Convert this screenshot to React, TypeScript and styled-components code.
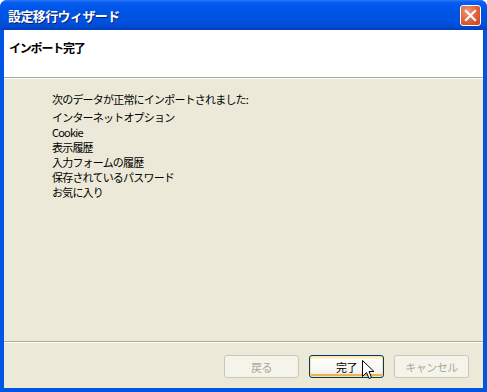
import React from "react";
import styled, { createGlobalStyle } from "styled-components";

const Global = createGlobalStyle`
  html, body { margin: 0; padding: 0; background: #ffffff; }
  * { box-sizing: border-box; }
`;

const FONT = `"MS UI Gothic", "Noto Sans CJK JP", "Liberation Sans", sans-serif`;

const Window = styled.div`
  position: relative;
  width: 487px;
  height: 392px;
  display: flex;
  flex-direction: column;
  background: #0055e5;
  border-radius: 7px 7px 0 0;
  overflow: hidden;
  font-family: ${FONT};
`;

const TitleBar = styled.div`
  height: 30px;
  flex: none;
  display: flex;
  align-items: center;
  justify-content: space-between;
  padding: 0 6px 0 8px;
  background: linear-gradient(
    to bottom,
    #2c7cf8 0px,
    #0a5ff0 2px,
    #0058ee 5px,
    #0054e3 12px,
    #0052e0 22px,
    #0049d0 27px,
    #003fbb 30px
  );
`;

const Title = styled.span`
  color: #ffffff;
  font-weight: bold;
  font-size: 13px;
  letter-spacing: -0.6px;
  text-shadow: 1px 1px 0 #0a1e70;
`;

const CloseButton = styled.div`
  width: 21px;
  height: 21px;
  border: 1px solid #ffffff;
  border-radius: 3px;
  background: radial-gradient(circle at 35% 30%, #f09a7c 0%, #e2673f 45%, #c8401c 100%);
  display: flex;
  align-items: center;
  justify-content: center;
  margin-top: 1px;
`;

const Frame = styled.div`
  flex: 1;
  display: flex;
  flex-direction: column;
  margin: 0 4px 4px 4px;
  background: #ece9d8;
`;

const Header = styled.div`
  height: 48px;
  flex: none;
  background: #ffffff;
  padding: 9px 0 0 5px;
  border-bottom: 1px solid #aca899;
`;

const HeaderTitle = styled.div`
  font-weight: bold;
  font-size: 12px;
  letter-spacing: -1.2px;
  color: #000000;
`;

const Body = styled.div`
  flex: 1;
  border-top: 1px solid #ffffff;
  padding: 13px 0 0 48px;
  display: flex;
  flex-direction: column;
`;

const Line = styled.div<{ $gap?: number }>`
  font-size: 11px;
  line-height: 15px;
  height: 15px;
  letter-spacing: -0.8px;
  color: #000000;
  margin-bottom: ${(p) => p.$gap ?? 0}px;
`;

const Footer = styled.div`
  height: 47px;
  flex: none;
  border-top: 1px solid #aca899;
  box-shadow: inset 0 1px 0 #ffffff;
  display: flex;
  justify-content: flex-end;
  gap: 10px;
  padding: 13px 14px 0 0;
`;

const Button = styled.div<{ $disabled?: boolean; $focused?: boolean }>`
  width: 75px;
  height: 23px;
  border-radius: 3px;
  display: flex;
  align-items: center;
  justify-content: center;
  font-size: 11px;
  letter-spacing: -0.5px;
  border: 1px solid ${(p) => (p.$disabled ? "#c9c7ba" : "#003c74")};
  color: ${(p) => (p.$disabled ? "#aca899" : "#000000")};
  background: ${(p) =>
    p.$disabled
      ? "#f5f4ea"
      : "linear-gradient(to bottom, #ffffff 0%, #f7f7f4 60%, #ecebe6 100%)"};
  box-shadow: ${(p) =>
    p.$focused
      ? "inset 0 0 0 1px #ffe29a, inset 0 -2px 0 1px #f0b04a, inset 0 2px 0 1px #fff0cf"
      : "none"};
`;

const Cursor = styled.svg`
  position: absolute;
  left: 362px;
  top: 360px;
`;

export default function App() {
  return (
    <>
      <Global />
      <Window>
        <TitleBar>
          <Title>設定移行ウィザード</Title>
          <CloseButton>
            <svg width="13" height="13" viewBox="0 0 13 13">
              <path d="M2 2 L11 11 M11 2 L2 11" stroke="#ffffff" strokeWidth="2.2" strokeLinecap="square" />
            </svg>
          </CloseButton>
        </TitleBar>
        <Frame>
          <Header>
            <HeaderTitle>インポート完了</HeaderTitle>
          </Header>
          <Body>
            <Line $gap={3}>次のデータが正常にインポートされました:</Line>
            <Line>インターネットオプション</Line>
            <Line>Cookie</Line>
            <Line>表示履歴</Line>
            <Line>入力フォームの履歴</Line>
            <Line>保存されているパスワード</Line>
            <Line>お気に入り</Line>
          </Body>
          <Footer>
            <Button $disabled>戻る</Button>
            <Button $focused>完了</Button>
            <Button $disabled>キャンセル</Button>
          </Footer>
        </Frame>
        <Cursor width="13" height="21" viewBox="0 0 13 21">
          <path
            d="M0.5 0.5 L0.5 16.5 L4.5 12.5 L7 18.5 L9.5 17.5 L7 11.5 L12 11.5 Z"
            fill="#ffffff"
            stroke="#000000"
            strokeWidth="1"
          />
        </Cursor>
      </Window>
    </>
  );
}
